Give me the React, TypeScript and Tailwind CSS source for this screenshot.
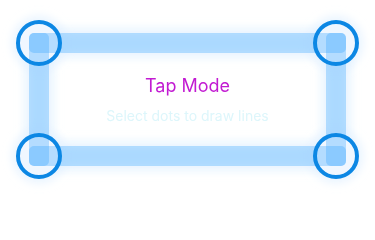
export default function App() {
  const dots = [
    { x: 39, y: 43 },
    { x: 336, y: 43 },
    { x: 39, y: 156 },
    { x: 336, y: 156 },
  ];

  return (
    <div className="relative w-[375px] h-[201px] bg-white overflow-hidden">
      {/* drawing: lines and dots */}
      <svg className="absolute inset-0" width="375" height="201" viewBox="0 0 375 201">
        <defs>
          <filter id="glow" x="-20%" y="-50%" width="140%" height="200%">
            <feGaussianBlur stdDeviation="6" />
          </filter>
          <filter id="ring" x="-50%" y="-50%" width="200%" height="200%">
            <feGaussianBlur stdDeviation="5" />
          </filter>
        </defs>

        {/* soft glow under the lines */}
        <g filter="url(#glow)" fill="#dcefff" opacity="0.8">
          <rect x="26" y="30" width="323" height="26" rx="6" />
          <rect x="26" y="143" width="323" height="26" rx="6" />
          <rect x="26" y="30" width="26" height="139" rx="6" />
          <rect x="323" y="30" width="26" height="139" rx="6" />
        </g>

        {/* glow around dots */}
        <g filter="url(#ring)">
          {dots.map((d, i) => (
            <circle key={i} cx={d.x} cy={d.y} r="27" fill="#e0f0ff" opacity="0.7" />
          ))}
        </g>

        {dots.map((d, i) => (
          <circle key={i} cx={d.x} cy={d.y} r="21" fill="#f0f7ff" />
        ))}

        {/* lines */}
        <g fill="#31a2ff" fillOpacity="0.31">
          <rect x="29" y="33" width="317" height="20" rx="5" />
          <rect x="29" y="146" width="317" height="20" rx="5" />
          <rect x="29" y="33" width="20" height="133" rx="5" />
          <rect x="326" y="33" width="20" height="133" rx="5" />
        </g>

        {/* dot rings */}
        {dots.map((d, i) => (
          <circle key={i} cx={d.x} cy={d.y} r="21" fill="none" stroke="#0c87e4" strokeWidth="4" />
        ))}
      </svg>

      {/* centre label */}
      <div className="relative flex flex-col items-center pt-[75px] font-['Inter',sans-serif]">
        <p className="text-[18px] leading-[22px] text-[#c21bd2]">Tap Mode</p>
        <p className="mt-[9px] text-[14px] leading-[20px] text-[#ddf6fb]">Select dots to draw lines</p>
      </div>
    </div>
  );
}
